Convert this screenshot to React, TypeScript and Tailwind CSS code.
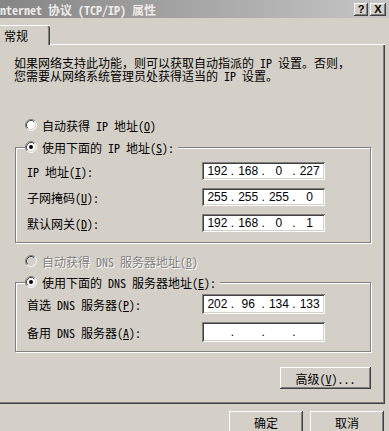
import React from "react";

const CJK = "font-['Noto_Sans_Mono_CJK_SC','Noto_Sans_CJK_SC',sans-serif]";
const RAISED =
  "shadow-[inset_-1px_-1px_0_#404040,inset_1px_1px_0_#ffffff,inset_-2px_-2px_0_#808080,inset_2px_2px_0_#d4d0c8]";
const SUNKEN =
  "shadow-[inset_1px_1px_0_#808080,inset_-1px_-1px_0_#ffffff,inset_2px_2px_0_#404040,inset_-2px_-2px_0_#d4d0c8]";

function Radio({ checked, disabled }: { checked?: boolean; disabled?: boolean }) {
  return (
    <svg width="12" height="12" viewBox="0 0 12 12" className="shrink-0">
      <circle cx="6" cy="6" r="5" fill={disabled ? "#d4d0c8" : "#ffffff"} />
      <path d="M2.11 9.89A5.5 5.5 0 0 1 9.89 2.11" fill="none" stroke="#808080" />
      <path d="M9.89 2.11A5.5 5.5 0 0 1 2.11 9.89" fill="none" stroke="#ffffff" />
      <path d="M2.82 9.18A4.5 4.5 0 0 1 9.18 2.82" fill="none" stroke="#404040" />
      <path d="M9.18 2.82A4.5 4.5 0 0 1 2.82 9.18" fill="none" stroke="#d4d0c8" />
      {checked && <circle cx="6" cy="6" r="2" fill="#000000" />}
    </svg>
  );
}

function IpField({ parts, tall }: { parts: string[]; tall?: boolean }) {
  return (
    <div
      className={`flex w-[123px] ${tall ? "h-[20px]" : "h-[18px]"} items-center bg-white px-[2px] ${SUNKEN} font-['Liberation_Sans',sans-serif] text-[12px] leading-none text-black`}
    >
      {parts.map((p, i) => (
        <React.Fragment key={i}>
          {i > 0 && <span className="w-[4px] text-left">.</span>}
          <span className="w-[27px] text-center">{p}</span>
        </React.Fragment>
      ))}
    </div>
  );
}

function Row({ label, parts, tall }: { label: React.ReactNode; parts: string[]; tall?: boolean }) {
  return (
    <div className="flex items-center">
      <div className="w-[175px] whitespace-nowrap">{label}</div>
      <IpField parts={parts} tall={tall} />
    </div>
  );
}

export default function App() {
  return (
    <div
      className={`relative h-[431px] w-[389px] overflow-hidden bg-[#d4d0c8] ${CJK} text-[12px] leading-[13px] text-black`}
    >
      {/* Title bar */}
      <div className="flex h-[18px] items-center bg-gradient-to-r from-[#858585] via-[#a6a6a6] to-[#c6c6c6] pr-[3px]">
        <div className="flex-1 whitespace-nowrap text-[12px] font-bold text-[#eeebe6]">
          nternet 协议 (TCP/IP) 属性
        </div>
        <div
          className={`flex h-[13px] w-[14px] items-center justify-center bg-[#d4d0c8] ${RAISED} font-['Liberation_Sans',sans-serif] text-[11px] font-bold`}
        >
          ?
        </div>
        <div
          className={`ml-[2px] flex h-[13px] w-[16px] items-center justify-center bg-[#d4d0c8] ${RAISED} font-['Liberation_Sans',sans-serif] text-[11px] font-bold`}
        >
          X
        </div>
      </div>

      {/* Tab */}
      <div className="mt-[7px] flex">
        <div className="relative z-10 -mb-[1px] flex h-[20px] w-[50px] items-center rounded-tr-[2px] border-t border-white bg-[#d4d0c8] pl-[4px] shadow-[inset_-1px_0_0_#404040,inset_-2px_0_0_#808080]">
          常规
        </div>
      </div>

      {/* Panel */}
      <div className="flex h-[360px] w-[385px] flex-col border-t border-white shadow-[inset_-1px_-1px_0_#404040,inset_-2px_-2px_0_#808080]">
        <p className="mt-[11px] pl-[14px] leading-[13px]">
          如果网络支持此功能，则可以获取自动指派的 IP 设置。否则，
          <br />
          您需要从网络系统管理员处获得适当的 IP 设置。
        </p>

        <div className="mt-[36px] flex h-[14px] items-center gap-[5px] pl-[25px]">
          <Radio />
          <span>
            自动获得 IP 地址(<u>O</u>)
          </span>
        </div>

        {/* IP group */}
        <div className="ml-[15px] mt-[15px] w-[356px] border border-[#808080] pb-[10px] pl-[11px] shadow-[1px_1px_0_#ffffff,inset_1px_1px_0_#ffffff]">
          <div className="-ml-[2px] -mt-[8px] flex h-[14px] w-fit items-center gap-[5px] bg-[#d4d0c8] pr-[4px]">
            <Radio checked />
            <span>
              使用下面的 IP 地址(<u>S</u>):
            </span>
          </div>
          <div className="mt-[8px] flex flex-col gap-[8px]">
            <Row label={<>IP 地址(<u>I</u>):</>} parts={["192", "168", "0", "227"]} />
            <Row label={<>子网掩码(<u>U</u>):</>} parts={["255", "255", "255", "0"]} />
            <Row label={<>默认网关(<u>D</u>):</>} parts={["192", "168", "0", "1"]} />
          </div>
        </div>

        <div className="mt-[11px] flex h-[14px] items-center gap-[5px] pl-[25px]">
          <Radio disabled />
          <span className="text-[#808080] [text-shadow:1px_1px_0_#ffffff]">
            自动获得 DNS 服务器地址(<u>B</u>)
          </span>
        </div>

        {/* DNS group */}
        <div className="ml-[15px] mt-[14px] w-[356px] border border-[#808080] pb-[9px] pl-[11px] shadow-[1px_1px_0_#ffffff,inset_1px_1px_0_#ffffff]">
          <div className="-ml-[2px] -mt-[8px] flex h-[14px] w-fit items-center gap-[5px] bg-[#d4d0c8] pr-[4px]">
            <Radio checked />
            <span>
              使用下面的 DNS 服务器地址(<u>E</u>):
            </span>
          </div>
          <div className="mt-[5px] flex flex-col gap-[8px]">
            <Row tall label={<>首选 DNS 服务器(<u>P</u>):</>} parts={["202", "96", "134", "133"]} />
            <Row tall label={<>备用 DNS 服务器(<u>A</u>):</>} parts={["", "", "", ""]} />
          </div>
        </div>

        <div className="mt-[15px] flex w-[371px] justify-end">
          <div className={`flex h-[22px] w-[91px] items-center justify-center ${RAISED}`}>
            高级(<u>V</u>)...
          </div>
        </div>
      </div>

      {/* Bottom buttons */}
      <div className="mt-[7px] flex w-[384px] justify-end gap-[7px]">
        <div className={`flex h-[23px] w-[74px] items-center justify-center ${RAISED}`}>确定</div>
        <div className={`flex h-[23px] w-[74px] items-center justify-center ${RAISED}`}>取消</div>
      </div>
    </div>
  );
}
